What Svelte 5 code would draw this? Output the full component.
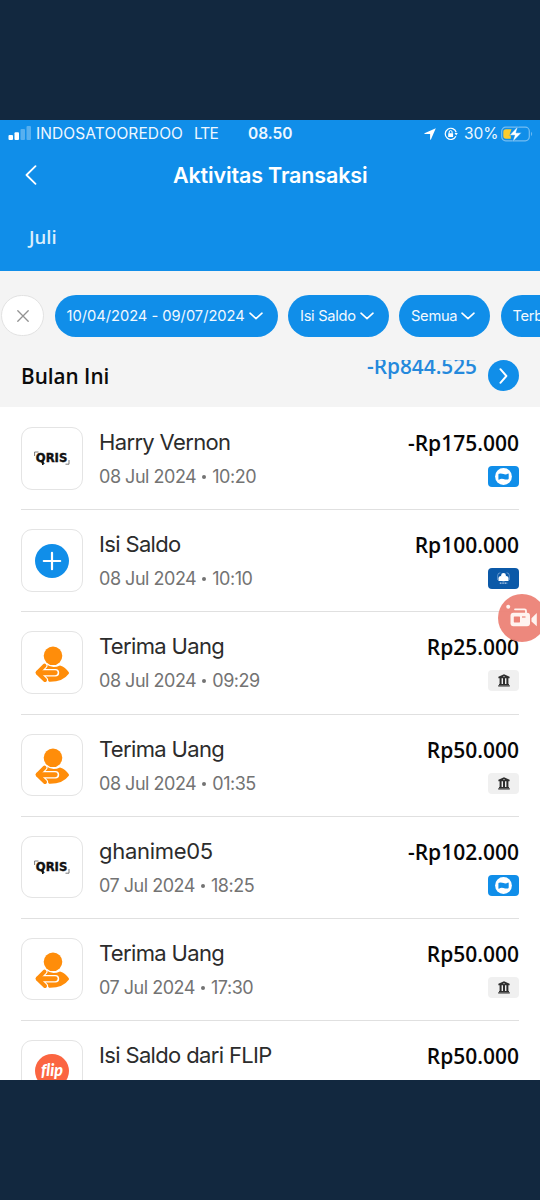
<script>
  const filters = [
    { label: '10/04/2024 - 09/07/2024', cls: 'date' },
    { label: 'Isi Saldo', cls: 'type' },
    { label: 'Semua', cls: 'all' },
    { label: 'Terbaru', cls: 'sort' }
  ];
  const rows = [
    { icon: 'qris', title: 'Harry Vernon', date: '08 Jul 2024', time: '10:20', amount: '-Rp175.000', badge: 'dana' },
    { icon: 'plus', title: 'Isi Saldo', date: '08 Jul 2024', time: '10:10', amount: 'Rp100.000', badge: 'bri' },
    { icon: 'user', title: 'Terima Uang', date: '08 Jul 2024', time: '09:29', amount: 'Rp25.000', badge: 'bank' },
    { icon: 'user', title: 'Terima Uang', date: '08 Jul 2024', time: '01:35', amount: 'Rp50.000', badge: 'bank' },
    { icon: 'qris', title: 'ghanime05', date: '07 Jul 2024', time: '18:25', amount: '-Rp102.000', badge: 'dana' },
    { icon: 'user', title: 'Terima Uang', date: '07 Jul 2024', time: '17:30', amount: 'Rp50.000', badge: 'bank' },
    { icon: 'flip', title: 'Isi Saldo dari FLIP', date: '', time: '', amount: 'Rp50.000', badge: '' }
  ];
</script>

<div class="page">
  <div class="screen">
    <header>
      <div class="status">
        <svg class="signal" width="24" height="16" viewBox="0 0 24 16" fill="#fff">
          <rect x="0.5" y="10" width="4.5" height="5" rx="1" />
          <rect x="6.5" y="7.2" width="4.5" height="7.8" rx="1" />
          <rect x="12.5" y="4" width="4.5" height="11" rx="1" opacity=".3" />
          <rect x="18.5" y="1" width="4.5" height="14" rx="1" opacity=".3" />
        </svg>
        <span class="carrier">INDOSATOOREDOO</span>
        <span class="lte">LTE</span>
        <span class="clock">08.50</span>
        <svg class="loc" width="12" height="12" viewBox="0 0 12 12"><path d="M11.8.2 6.8 11.7Q6.2 12 6.1 11.3V6.1H.7Q0 5.8.5 5.3Z" fill="#fff" /></svg>
        <svg class="lock" width="14" height="14" viewBox="0 0 14 14" fill="none" stroke="#fff" stroke-width="1.2">
          <path d="M11.9 9.3A5.6 5.6 0 1 1 12.2 5.2" />
          <path d="M10.5 6h3.3l-1.6 2.5z" fill="#fff" stroke="none" />
          <rect x="4.2" y="6.2" width="4.9" height="3.8" rx=".5" fill="#fff" stroke="none" />
          <path d="M5.2 6.5V5a1.45 1.45 0 0 1 2.9 0v1.5" stroke-width="1" />
        </svg>
        <span class="percent">30%</span>
        <svg class="battery" width="33" height="16" viewBox="0 0 33 16">
          <rect x=".7" y="1.2" width="27.6" height="13.6" rx="4" fill="none" stroke="#fff" stroke-opacity=".42" stroke-width="1.2" />
          <path d="M30.2 5.8q1.9 2.2 0 4.4z" fill="#fff" opacity=".45" />
          <path d="M5 3.2h5.5L8.8 8h1v4.8H5Q2.3 12.8 2.3 10V6Q2.3 3.2 5 3.2Z" fill="#fdcc2d" />
          <path d="M17 .3 8.5 9.3h5.2L11.5 15.9 20.5 6.8H15Z" fill="#fff" stroke="#108ee9" stroke-width=".5" />
        </svg>
      </div>
      <div class="nav">
        <svg class="back" width="12" height="20" viewBox="0 0 12 20" fill="none" stroke="#fff" stroke-width="1.8" stroke-linecap="round" stroke-linejoin="round"><path d="M10.5 1.2 1.5 10l9 8.8" /></svg>
        <h1>Aktivitas Transaksi</h1>
      </div>
      <div class="month"><span>Juli</span></div>
    </header>

    <div class="filters">
      <button class="clear" aria-label="Hapus">
        <svg width="12" height="12" viewBox="0 0 12 12" stroke="#929292" stroke-width="1.3" stroke-linecap="round"><path d="M.8.8l10.4 10.4M11.2.8.8 11.2" /></svg>
      </button>
      {#each filters as f}
        <button class="pill {f.cls}">
          <span>{f.label}</span>
          <svg width="14" height="8" viewBox="0 0 14 8" fill="none" stroke="#fff" stroke-width="1.6" stroke-linecap="round" stroke-linejoin="round"><path d="M1 1.2 7 6.7 13 1.2" /></svg>
        </button>
      {/each}
    </div>

    <div class="summary">
      <span class="period">Bulan Ini</span>
      <div class="total"><span>-Rp844.525</span></div>
      <button class="go" aria-label="Detail">
        <svg width="9" height="16" viewBox="0 0 9 16" fill="none" stroke="#fff" stroke-width="1.9" stroke-linecap="round" stroke-linejoin="round"><path d="M1.4 1.2 7.4 8l-6 6.8" /></svg>
      </button>
    </div>

    <div class="list">
      {#each rows as r}
        <div class="row">
          <div class="tile">
            {#if r.icon === 'qris'}
              <svg width="38" height="18" viewBox="0 0 38 18">
                <text class="qris" x="2.8" y="13.4" textLength="31.5" lengthAdjust="spacingAndGlyphs">QRIS</text>
                <path d="M1.6 7V3H5.5M36 11v4.2H32.5" fill="none" stroke="#555" stroke-width=".8" />
                <path d="M9.8 11.5v4.5" stroke="#111" stroke-width="1.6" />
              </svg>
            {:else if r.icon === 'plus'}
              <svg class="plus" width="34" height="34" viewBox="0 0 34 34"><circle cx="17" cy="17" r="17" fill="#108ee9" /><path d="M17 8.8v16.4M8.8 17h16.4" stroke="#fff" stroke-width="2.2" stroke-linecap="round" /></svg>
            {:else if r.icon === 'user'}
              <svg width="40" height="40" viewBox="-20 -20 40 40">
                <path d="M-6 1Q0 6 8 2.4Q13.5 4 16.8 9.3Q17.2 10 16.8 10.7Q10.5 19.2-3 18.8L-9 10Z" fill="#ff8d0a" />
                <path d="M-7.5 2.6-14.5 9.7-7 17" fill="none" stroke="#fff" stroke-width="6" stroke-linecap="round" stroke-linejoin="round" />
                <path d="M-14 9.7H3.4" fill="none" stroke="#fff" stroke-width="7.6" stroke-linecap="round" />
                <path d="M-7.5 2.6-14.5 9.7-7 17" fill="none" stroke="#ff8d0a" stroke-width="4" stroke-linecap="round" stroke-linejoin="round" />
                <path d="M-13.5 9.7H3.2" fill="none" stroke="#ff8d0a" stroke-width="4.9" stroke-linecap="round" />
                <circle cx="1" cy="-7.2" r="10.2" fill="#fff" />
                <circle cx="1" cy="-7.2" r="9.3" fill="#ff8d0a" />
              </svg>
            {:else}
              <svg width="34" height="34" viewBox="0 0 34 34"><circle cx="17" cy="17" r="17" fill="#fb6541" /><text class="flip" x="6" y="21.8" textLength="22" lengthAdjust="spacingAndGlyphs">flip</text></svg>
            {/if}
          </div>
          <div class="info">
            <div class="title" class:loose={r.title === 'ghanime05'}>{r.title}</div>
            {#if r.date}<div class="when">{r.date} <i></i> {r.time}</div>{/if}
          </div>
          <div class="right">
            <div class="amount">{r.amount}</div>
            {#if r.badge === 'dana'}
              <div class="badge dana">
                <svg width="17" height="17" viewBox="0 0 17 17"><circle cx="8.5" cy="8.5" r="8.4" fill="#fff" /><path d="M3.4 6.6Q3.4 5.9 4 5.8 6 5.3 8.5 6.1T13.1 5.5Q13.7 5.4 13.7 6V10.6Q13.7 11.2 13 11.4 11 11.9 8.5 11T4 11.7Q3.4 11.8 3.4 11.2Z" fill="#108ee9" /></svg>
              </div>
            {:else if r.badge === 'bri'}
              <div class="badge bri">
                <svg width="13" height="13" viewBox="0 0 13 13" fill="#fff"><path d="M3.4.8Q.7.8.7 3.5V8M9.6.8Q12.3.8 12.3 3.5V8" fill="none" stroke="#9fc1e6" stroke-width=".6" /><circle cx="6.5" cy="3.4" r="2.4" /><circle cx="4" cy="6.4" r="2.5" /><circle cx="9" cy="6.4" r="2.5" /><path d="M6 5h1l.6 4.2H5.4zM1.5 7.5h10v1.4h-10z" /><path d="M2.8 11.2h7.4" stroke="#b5d0ed" stroke-width="1.2" stroke-dasharray="1.2 .5" /></svg>
              </div>
            {:else if r.badge === 'bank'}
              <div class="badge bank">
                <svg width="12" height="13" viewBox="0 0 12 13" fill="#2e2e2e"><path d="M6 .2 11.6 2.8V4.2H.4V2.8ZM1.6 4.2h2v6h-2zM5 4.2h2v6H5zM8.4 4.2h2v6h-2zM1 10h10v1H1zM.2 11.2h11.6v1.4H.2z" /><circle cx="6" cy="2.6" r=".6" fill="#eee" /></svg>
              </div>
            {/if}
          </div>
        </div>
      {/each}
    </div>

    <div class="recorder">
      <svg width="48" height="48" viewBox="0 0 48 48">
        <circle cx="24" cy="24" r="24" fill="#ec8378" fill-opacity=".96" />
        <g fill="#fff3f0">
          <circle cx="10.2" cy="12.7" r="2" />
          <path d="M17 15.3h9.5q1.5 0 1.5 1.5V20" fill="none" stroke="#fff3f0" stroke-width="1.8" stroke-linecap="round" />
          <rect x="12.5" y="18.7" width="19.5" height="13.5" rx="3" />
          <path d="M33.5 24.2 38.8 19v13.2L33.5 27.5Z" />
        </g>
        <rect x="15.8" y="22.4" width="6.2" height="6" rx=".6" fill="#ec8378" />
        <path d="M24 23h3.5" stroke="#ec8378" stroke-width="1.2" />
      </svg>
    </div>
  </div>
</div>

<style>
  :global(body) { margin: 0; background: #12283f; }
  .page { box-sizing: border-box; width: 540px; height: 1200px; padding: 120px 0; background: #12283f; font-family: Inter, "Liberation Sans", sans-serif; }
  .screen { position: relative; height: 960px; overflow: hidden; background: #fff; }
  svg { display: block; flex: none; }
  span { white-space: nowrap; }
  button { border: 0; padding: 0; font: inherit; display: flex; align-items: center; flex: none; box-sizing: border-box; }

  header { height: 151px; background: #108ee9; color: #fff; }
  .status { display: flex; align-items: center; height: 27px; padding: 0 0 1px 8px; font-size: 15.5px; color: #eef7ff; }
  .signal { margin-right: 4px; margin-top: -1px; }
  .carrier { width: 158px; letter-spacing: .1px; }
  .lte { width: 54px; letter-spacing: -.9px; }
  .clock { width: 176px; font-weight: 600; }
  .loc { margin-right: 8px; }
  .lock { margin-right: 6px; }
  .percent { width: 37px; letter-spacing: -.1px; }
  .nav { display: flex; align-items: center; height: 54px; padding-left: 25px; }
  h1 { margin: 0 0 0 136px; font-size: 21.5px; line-height: 26px; font-weight: 600; letter-spacing: -.15px; white-space: nowrap; }
  .month { padding: 22px 0 0 29px; font: 600 18.5px/26px "Open Sans", sans-serif; color: #dceefc; }

  .filters { display: flex; align-items: center; gap: 10.5px; height: 89px; background: #f4f4f4; overflow: hidden; }
  .clear { width: 43px; height: 41px; margin-left: 1px; background: #fff; border: 1.5px solid #e2e2e2; border-radius: 21px; justify-content: center; }
  .pill { height: 42px; border-radius: 21px; background: #108ee9; color: #f2f9ff; font-size: 14.7px; letter-spacing: -.3px; padding-left: 12px; gap: 4px; }
  .date { width: 223px; letter-spacing: -.02px; }
  .type { width: 100.5px; }
  .all { width: 91px; }
  .sort { width: 100px; }

  .summary { display: flex; height: 47px; padding: 0 21px; background: #f4f4f4; font-family: "Open Sans", sans-serif; font-weight: 600; }
  .period { flex: 1; font-size: 20.7px; line-height: 32px; color: #0b0b0b; }
  .total { height: 32px; overflow: hidden; margin-right: 11px; font-size: 20.8px; color: #2489dc; }
  .total span { display: block; margin-top: -8px; line-height: 28px; }
  .go { width: 31px; height: 31px; border-radius: 50%; background: #108ee9; justify-content: center; }

  .list { padding: 1px 21px 0; }
  .row { box-sizing: border-box; height: 102.2px; padding-top: 19px; display: flex; border-bottom: 1.5px solid #e0e0e0; }
  .tile { box-sizing: border-box; width: 62px; height: 62.5px; border: 1.5px solid #e4e4e4; border-radius: 11px; display: flex; align-items: center; justify-content: center; }
  .plus { margin-top: 2px; }
  .info { flex: 1; padding: 1px 0 0 16px; }
  .title { font-size: 22px; line-height: 28px; color: #2c2c2c; letter-spacing: -.65px; }
  .loose { letter-spacing: -.3px; }
  .when { margin-top: 9px; display: flex; align-items: center; gap: 6px; font-size: 18px; line-height: 24px; letter-spacing: -.48px; color: #737373; }
  .when i { width: 4px; height: 4px; border-radius: 50%; background: #737373; }
  .right { display: flex; flex-direction: column; align-items: flex-end; padding-top: 1px; }
  .amount { font: 600 21px/30px "Open Sans", sans-serif; color: #070707; }
  .badge { width: 31px; height: 21px; margin-top: 8px; border-radius: 4px; display: flex; align-items: center; justify-content: center; }
  .dana { background: #108ee9; }
  .bri { background: #0b59a8; }
  .bank { background: #f0f0f0; }
  .qris { font: bold 11.5px "DejaVu Sans", sans-serif; fill: #111; stroke: #111; stroke-width: .4px; }
  .flip { font: italic 900 16px Lato, sans-serif; fill: #fff; font-variant-ligatures: none; }
  .recorder { position: absolute; left: 498px; top: 473.5px; }
</style>
